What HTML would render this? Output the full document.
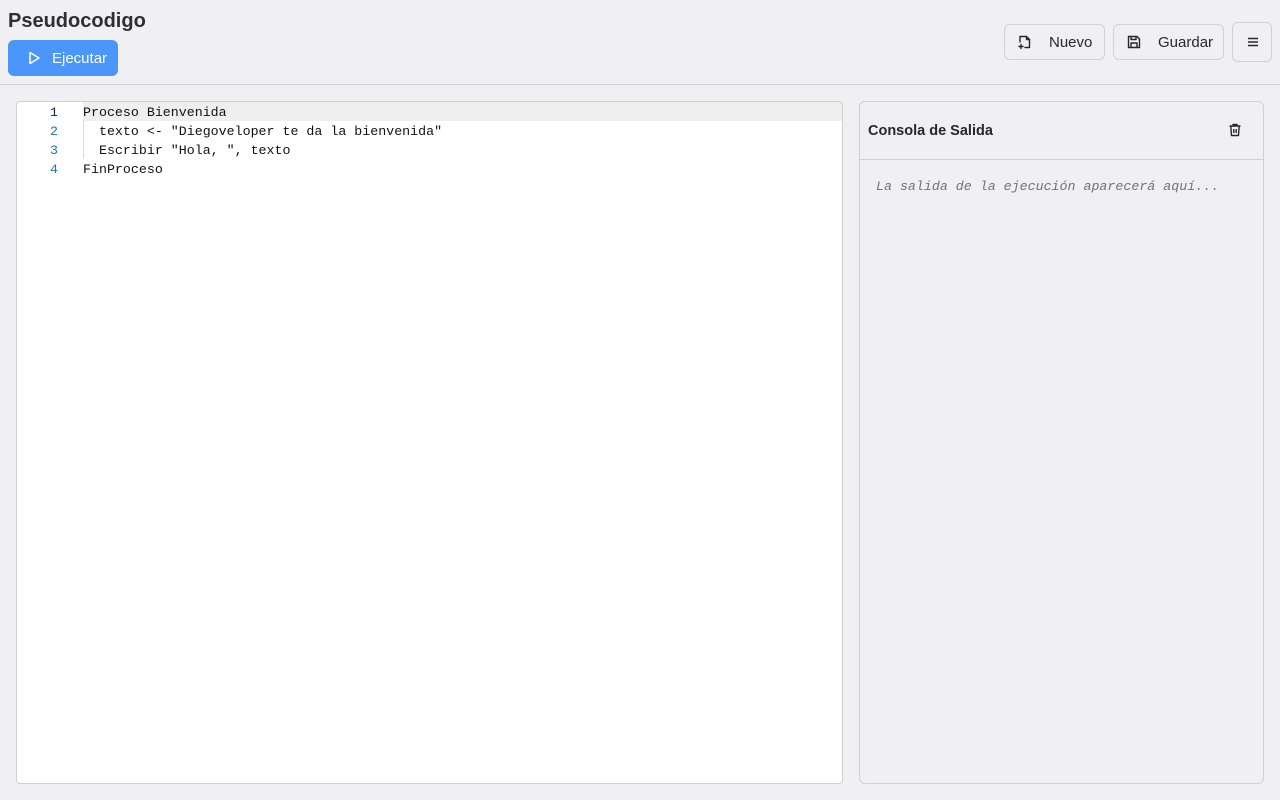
<!DOCTYPE html>
<html><head><meta charset="utf-8"><style>
*{box-sizing:border-box;margin:0;padding:0}
body{width:1280px;height:800px;background:#f0f0f2;font-family:"Liberation Sans",sans-serif;color:#27272a;position:relative;overflow:hidden}
.title{position:absolute;left:8px;top:10px;font-size:20px;font-weight:bold;color:#2f2f33}
.run{position:absolute;left:8px;top:40px;width:110px;height:36px;background:#4a96fb;border-radius:6px;color:#fff;font-size:15px}
.run svg{position:absolute;left:18px;top:10px}
.run span{position:absolute;left:44px;top:10px}
.btn{position:absolute;top:24px;height:36px;border:1px solid #d0d0d6;border-radius:6px;font-size:15px;color:#27272a;background:#f0f0f2}
.btn svg{position:absolute;left:12px;top:9px}
.btn span{position:absolute;top:9px}
.hr{position:absolute;left:0;top:84px;width:1280px;height:1px;background:#cfcfd5}
.ed{position:absolute;left:16px;top:101px;width:827px;height:683px;background:#fff;border:1px solid #cfcfd5;border-radius:4px;overflow:hidden}
.ln{position:absolute;left:0;width:41px;text-align:right;font-family:"Liberation Mono",monospace;font-size:13.3px;color:#237893;height:19px;line-height:21px}
.code{position:absolute;left:66px;font-family:"Liberation Mono",monospace;font-size:13.3px;color:#111;height:19px;line-height:21px;white-space:pre}
.con{position:absolute;left:859px;top:101px;width:405px;height:683px;border:1px solid #cfcfd5;border-radius:6px;background:#f0f0f2}
.con .h{height:58px;border-bottom:1px solid #cfcfd5;position:relative}
.con .h b{position:absolute;left:8px;top:21px;font-size:14.5px;color:#27272a}
.ph{position:absolute;left:16px;top:77px;font-family:"Liberation Mono",monospace;font-style:italic;font-size:13.3px;color:#71717a}
</style></head><body>
<div class="title">Pseudocodigo</div>
<div class="run"><svg width="16" height="16" viewBox="0 0 16 16" fill="none" stroke="#fff" stroke-width="1.5" stroke-linejoin="round"><path d="M4 2.5v11l9-5.5z"/></svg><span>Ejecutar</span></div>
<div class="btn" style="left:1004px;width:101px"><svg width="16" height="16" viewBox="0 0 16 16" fill="none" stroke="#27272a" stroke-width="1.4" stroke-linecap="round" stroke-linejoin="round"><path d="M3 8V2.5h6.5l3 3V13.5H8"/><path d="M9.5 2.5v3h3"/><path d="M4 10.5v4M2 12.5h4"/></svg><span style="left:44px">Nuevo</span></div>
<div class="btn" style="left:1113px;width:111px"><svg width="16" height="16" viewBox="0 0 16 16" fill="none" stroke="#27272a" stroke-width="1.4" stroke-linejoin="round"><path d="M2.5 2.5h8.5l2.5 2.5v8.5h-11z"/><path d="M5 2.5v3h5v-3M5 13.5v-4.5h6v4.5"/></svg><span style="left:44px">Guardar</span></div>
<div class="btn" style="left:1232px;width:40px;top:22px;height:40px"><svg style="left:12px;top:11px" width="16" height="16" viewBox="0 0 16 16" stroke="#27272a" stroke-width="1.5"><path d="M3 4.5h10M3 8h10M3 11.5h10"/></svg></div>
<div class="hr"></div>
<div class="ed">
<div style="position:absolute;left:66px;top:0;width:760px;height:19px;background:#efeff0"></div>
<div style="position:absolute;left:66px;top:19px;width:1px;height:38px;background:#d8d8d8"></div>
<div class="ln" style="top:0;color:#0b216f">1</div><div class="code" style="top:0">Proceso Bienvenida</div>
<div class="ln" style="top:19px">2</div><div class="code" style="top:19px">  texto &lt;- "Diegoveloper te da la bienvenida"</div>
<div class="ln" style="top:38px">3</div><div class="code" style="top:38px">  Escribir "Hola, ", texto</div>
<div class="ln" style="top:57px">4</div><div class="code" style="top:57px">FinProceso</div>
</div>
<div class="con"><div class="h"><b>Consola de Salida</b>
<svg style="position:absolute;left:367px;top:20px" width="16" height="16" viewBox="0 0 16 16" fill="none" stroke="#27272a" stroke-width="1.4" stroke-linejoin="round"><path d="M2.5 4h11M6 4V2.5h4V4M3.8 4l.7 9.5h7l.7-9.5M6.8 7v4M9.2 7v4"/></svg></div>
<div class="ph">La salida de la ejecución aparecerá aquí...</div></div>
</body></html>
